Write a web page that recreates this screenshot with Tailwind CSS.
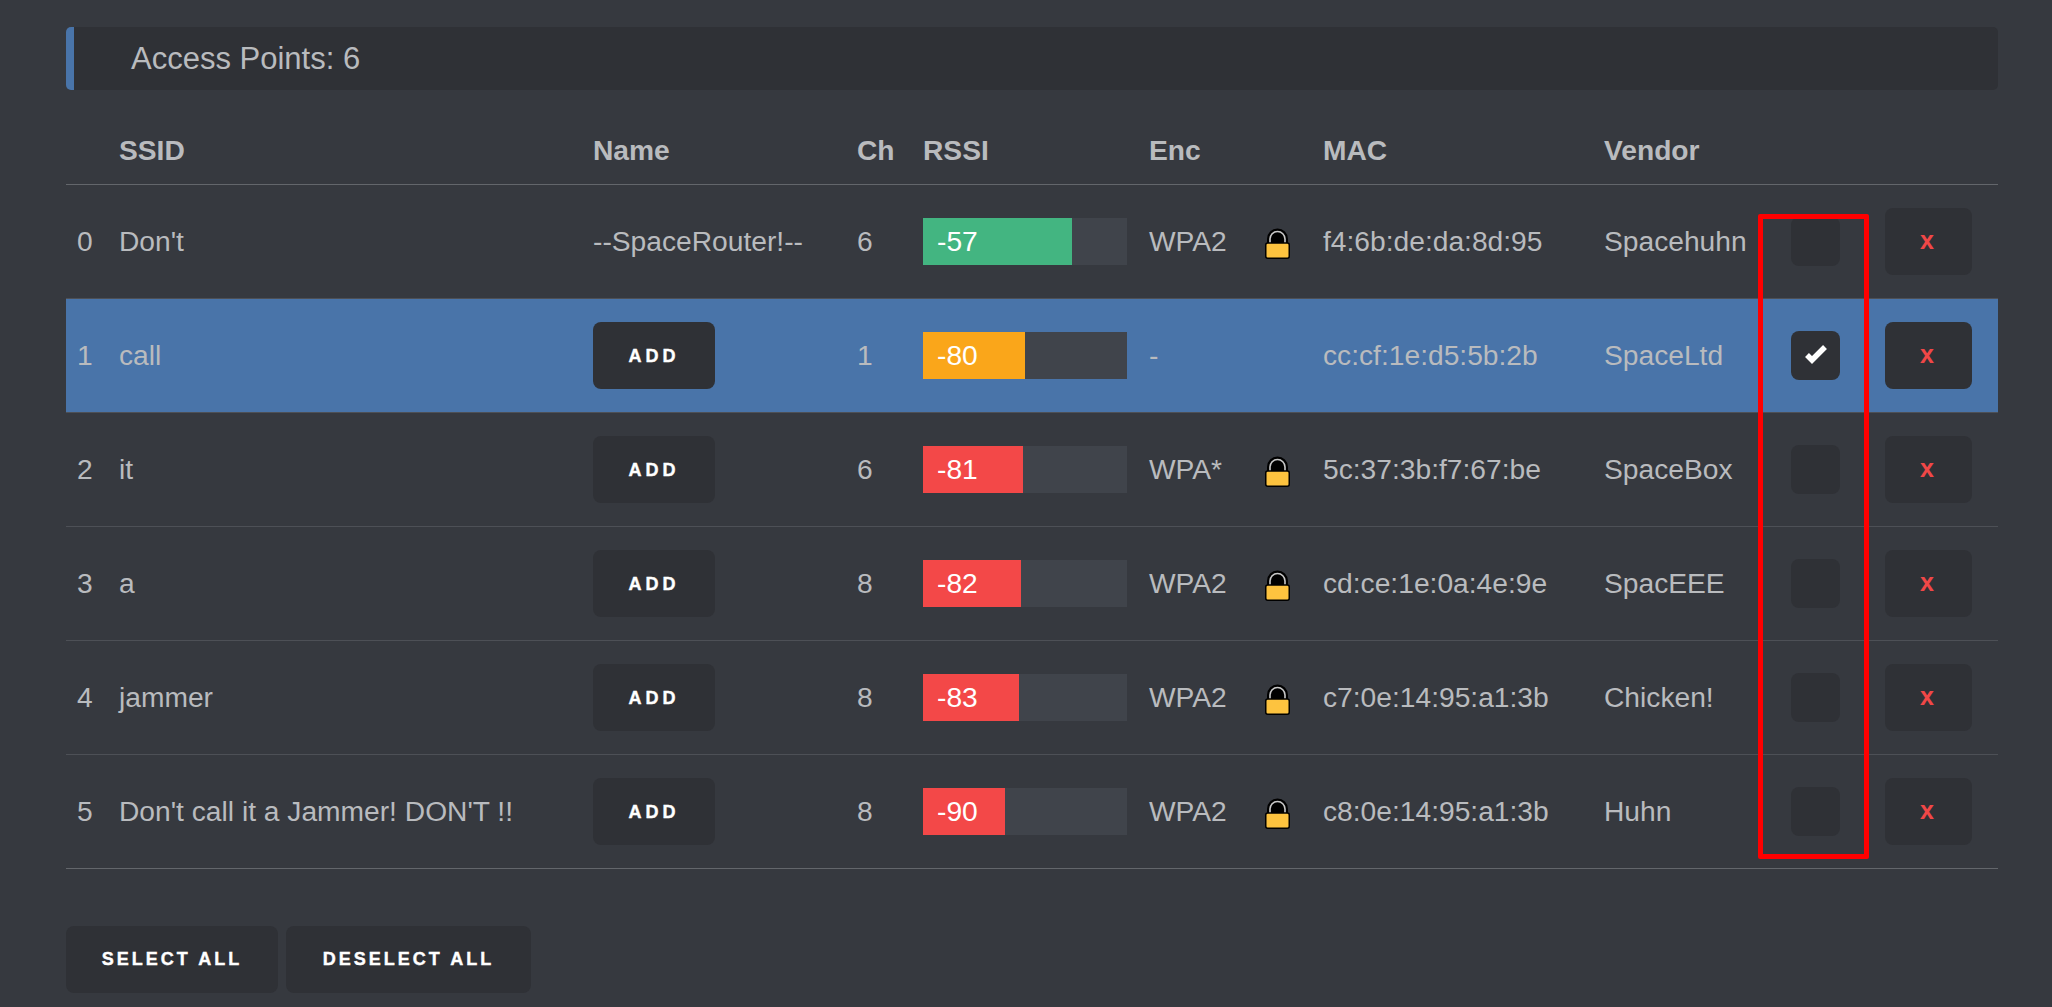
<!DOCTYPE html>
<html lang="en">
  <head>
    <meta charset="UTF-8" />
    <title>Access Points</title>
    <script src="https://cdn.jsdelivr.net/npm/@tailwindcss/browser@4"></script>
  </head>
  <body class="bg-[#36393f] text-[#b9bbbe] font-['Liberation_Sans',Arial,sans-serif] h-[1007px] overflow-hidden">
    <div class="relative pl-[66px] pr-[54px] pt-[27px]">
      <div class="h-[63px] bg-[#2f3136] border-l-[8px] border-[#4974a9] rounded-[5px] pl-[57px] pt-[2px] flex items-center text-[31px]">Access Points: 6</div>

      <table class="table-fixed w-full mt-[25px] text-[28.2px] border-collapse">
        <colgroup>
          <col class="w-[53px]" /><col class="w-[474px]" /><col class="w-[264px]" /><col class="w-[66px]" /><col class="w-[226px]" /><col class="w-[116px]" /><col class="w-[58px]" /><col class="w-[281px]" /><col class="w-[187px]" /><col class="w-[94px]" /><col />
        </colgroup>
        <thead>
          <tr class="h-[69px] border-b border-[#63666b] text-left font-bold">
            <th></th><th class="pt-[2px]">SSID</th><th class="pt-[2px]">Name</th><th class="pt-[2px]">Ch</th><th class="pt-[2px]">RSSI</th><th class="pt-[2px]">Enc</th><th></th><th class="pt-[2px]">MAC</th><th class="pt-[2px]">Vendor</th><th></th><th></th>
          </tr>
        </thead>
        <tbody>
          <tr class="h-[114px] border-b border-[#4d5056]">
            <td class="pl-[11px]">0</td><td>Don't</td><td>--SpaceRouter!--</td><td>6</td>
            <td><div class="w-[204px] h-[47px] bg-[#40444b]"><div class="h-full w-[149px] bg-[#43b581] text-white pl-[14px] leading-[47px]">-57</div></div></td>
            <td>WPA2</td>
            <td><svg class="block mt-[4px]" width="25" height="31" viewBox="0 0 25 31"><path d="M2 17V11a10.5 10.5 0 0 1 21 0v6z" fill="#000"/><path d="M5 16V11a7.5 7.5 0 0 1 15 0v5" fill="none" stroke="#c8c8c8" stroke-width="1.6"/><rect x="0.75" y="15" width="23.5" height="15.25" rx="2" fill="#fdc33f" stroke="#000" stroke-width="1.5"/></svg></td>
            <td>f4:6b:de:da:8d:95</td><td>Spacehuhn</td>
            <td><div class="w-[49px] h-[49px] bg-[#2f3136] rounded-[8px]"></div></td>
            <td><button class="w-[87px] h-[67px] pr-[3px] bg-[#2f3136] rounded-[8px] text-[#f04747] font-bold text-[25px]">x</button></td>
          </tr>
          <tr class="h-[114px] border-b border-[#4d5056] bg-[#4974a9]">
            <td class="pl-[11px]">1</td><td>call</td>
            <td><button class="w-[122px] h-[67px] pt-[2px] bg-[#2f3136] rounded-[8px] text-white font-bold text-[18px] tracking-[4px] [-webkit-text-stroke:0.4px_white]">ADD</button></td>
            <td>1</td>
            <td><div class="w-[204px] h-[47px] bg-[#40444b]"><div class="h-full w-[102px] bg-[#faa61a] text-white pl-[14px] leading-[47px]">-80</div></div></td>
            <td>-</td><td></td>
            <td>cc:cf:1e:d5:5b:2b</td><td>SpaceLtd</td>
            <td><div class="w-[49px] h-[49px] bg-[#2f3136] rounded-[8px] flex items-center justify-center"><svg width="24" height="20" viewBox="0 0 24 20"><path d="M3 10l5 5L21 2" fill="none" stroke="#fff" stroke-width="5.5"/></svg></div></td>
            <td><button class="w-[87px] h-[67px] pr-[3px] bg-[#2f3136] rounded-[8px] text-[#f04747] font-bold text-[25px]">x</button></td>
          </tr>
          <tr class="h-[114px] border-b border-[#4d5056]">
            <td class="pl-[11px]">2</td><td>it</td>
            <td><button class="w-[122px] h-[67px] pt-[2px] bg-[#2f3136] rounded-[8px] text-white font-bold text-[18px] tracking-[4px] [-webkit-text-stroke:0.4px_white]">ADD</button></td>
            <td>6</td>
            <td><div class="w-[204px] h-[47px] bg-[#40444b]"><div class="h-full w-[100px] bg-[#f34848] text-white pl-[14px] leading-[47px]">-81</div></div></td>
            <td>WPA*</td>
            <td><svg class="block mt-[4px]" width="25" height="31" viewBox="0 0 25 31"><path d="M2 17V11a10.5 10.5 0 0 1 21 0v6z" fill="#000"/><path d="M5 16V11a7.5 7.5 0 0 1 15 0v5" fill="none" stroke="#c8c8c8" stroke-width="1.6"/><rect x="0.75" y="15" width="23.5" height="15.25" rx="2" fill="#fdc33f" stroke="#000" stroke-width="1.5"/></svg></td>
            <td>5c:37:3b:f7:67:be</td><td>SpaceBox</td>
            <td><div class="w-[49px] h-[49px] bg-[#2f3136] rounded-[8px]"></div></td>
            <td><button class="w-[87px] h-[67px] pr-[3px] bg-[#2f3136] rounded-[8px] text-[#f04747] font-bold text-[25px]">x</button></td>
          </tr>
          <tr class="h-[114px] border-b border-[#4d5056]">
            <td class="pl-[11px]">3</td><td>a</td>
            <td><button class="w-[122px] h-[67px] pt-[2px] bg-[#2f3136] rounded-[8px] text-white font-bold text-[18px] tracking-[4px] [-webkit-text-stroke:0.4px_white]">ADD</button></td>
            <td>8</td>
            <td><div class="w-[204px] h-[47px] bg-[#40444b]"><div class="h-full w-[98px] bg-[#f34848] text-white pl-[14px] leading-[47px]">-82</div></div></td>
            <td>WPA2</td>
            <td><svg class="block mt-[4px]" width="25" height="31" viewBox="0 0 25 31"><path d="M2 17V11a10.5 10.5 0 0 1 21 0v6z" fill="#000"/><path d="M5 16V11a7.5 7.5 0 0 1 15 0v5" fill="none" stroke="#c8c8c8" stroke-width="1.6"/><rect x="0.75" y="15" width="23.5" height="15.25" rx="2" fill="#fdc33f" stroke="#000" stroke-width="1.5"/></svg></td>
            <td>cd:ce:1e:0a:4e:9e</td><td>SpacEEE</td>
            <td><div class="w-[49px] h-[49px] bg-[#2f3136] rounded-[8px]"></div></td>
            <td><button class="w-[87px] h-[67px] pr-[3px] bg-[#2f3136] rounded-[8px] text-[#f04747] font-bold text-[25px]">x</button></td>
          </tr>
          <tr class="h-[114px] border-b border-[#4d5056]">
            <td class="pl-[11px]">4</td><td>jammer</td>
            <td><button class="w-[122px] h-[67px] pt-[2px] bg-[#2f3136] rounded-[8px] text-white font-bold text-[18px] tracking-[4px] [-webkit-text-stroke:0.4px_white]">ADD</button></td>
            <td>8</td>
            <td><div class="w-[204px] h-[47px] bg-[#40444b]"><div class="h-full w-[96px] bg-[#f34848] text-white pl-[14px] leading-[47px]">-83</div></div></td>
            <td>WPA2</td>
            <td><svg class="block mt-[4px]" width="25" height="31" viewBox="0 0 25 31"><path d="M2 17V11a10.5 10.5 0 0 1 21 0v6z" fill="#000"/><path d="M5 16V11a7.5 7.5 0 0 1 15 0v5" fill="none" stroke="#c8c8c8" stroke-width="1.6"/><rect x="0.75" y="15" width="23.5" height="15.25" rx="2" fill="#fdc33f" stroke="#000" stroke-width="1.5"/></svg></td>
            <td>c7:0e:14:95:a1:3b</td><td>Chicken!</td>
            <td><div class="w-[49px] h-[49px] bg-[#2f3136] rounded-[8px]"></div></td>
            <td><button class="w-[87px] h-[67px] pr-[3px] bg-[#2f3136] rounded-[8px] text-[#f04747] font-bold text-[25px]">x</button></td>
          </tr>
          <tr class="h-[114px] border-b border-[#63666b]">
            <td class="pl-[11px]">5</td><td>Don't call it a Jammer! DON'T !!</td>
            <td><button class="w-[122px] h-[67px] pt-[2px] bg-[#2f3136] rounded-[8px] text-white font-bold text-[18px] tracking-[4px] [-webkit-text-stroke:0.4px_white]">ADD</button></td>
            <td>8</td>
            <td><div class="w-[204px] h-[47px] bg-[#40444b]"><div class="h-full w-[82px] bg-[#f34848] text-white pl-[14px] leading-[47px]">-90</div></div></td>
            <td>WPA2</td>
            <td><svg class="block mt-[4px]" width="25" height="31" viewBox="0 0 25 31"><path d="M2 17V11a10.5 10.5 0 0 1 21 0v6z" fill="#000"/><path d="M5 16V11a7.5 7.5 0 0 1 15 0v5" fill="none" stroke="#c8c8c8" stroke-width="1.6"/><rect x="0.75" y="15" width="23.5" height="15.25" rx="2" fill="#fdc33f" stroke="#000" stroke-width="1.5"/></svg></td>
            <td>c8:0e:14:95:a1:3b</td><td>Huhn</td>
            <td><div class="w-[49px] h-[49px] bg-[#2f3136] rounded-[8px]"></div></td>
            <td><button class="w-[87px] h-[67px] pr-[3px] bg-[#2f3136] rounded-[8px] text-[#f04747] font-bold text-[25px]">x</button></td>
          </tr>
        </tbody>
      </table>

      <div class="flex gap-[8px] mt-[57px] pb-[14px] border-b border-[#63666b]">
        <button class="w-[212px] h-[67px] bg-[#2f3136] rounded-[8px] text-white font-bold text-[18px] tracking-[3px] [-webkit-text-stroke:0.4px_white]">SELECT ALL</button>
        <button class="w-[245px] h-[67px] bg-[#2f3136] rounded-[8px] text-white font-bold text-[18px] tracking-[3px] [-webkit-text-stroke:0.4px_white]">DESELECT ALL</button>
      </div>

      <!-- annotation drawn over the screenshot -->
      <div class="absolute left-[1758px] top-[214px] w-[111px] h-[645px] border-[5px] border-[#ff0000] rounded-[2px]"></div>
    </div>
  </body>
</html>
